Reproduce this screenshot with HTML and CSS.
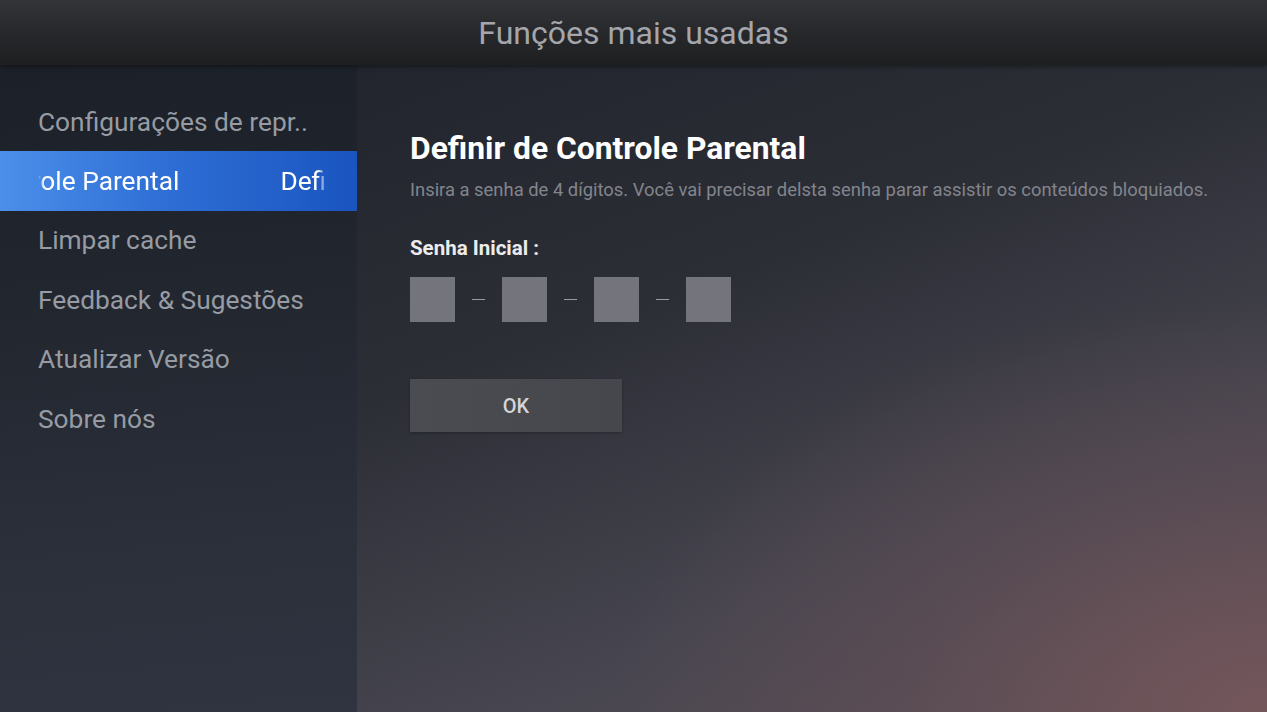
FILE: index.html
```html
<!DOCTYPE html>
<html lang="pt">
<head>
    <meta charset="UTF-8">
    <meta name="viewport" content="width=device-width, initial-scale=1.0">
    <title>Funções mais usadas</title>
    <link rel="stylesheet" href="styles.css">
</head>
<body>
    <div class="screen">
        <header class="topbar">
            <h1 class="topbar-title">Funções mais usadas</h1>
        </header>

        <div class="body">
            <nav class="menu">
                <div class="menu-item">Configurações de repr..</div>
                <div class="menu-item active">
                    <div class="marquee">
                        <span class="marquee-text">Definir de Controle Parental</span>
                        <span class="marquee-text">Definir de Controle Parental</span>
                    </div>
                </div>
                <div class="menu-item">Limpar cache</div>
                <div class="menu-item">Feedback &amp; Sugestões</div>
                <div class="menu-item">Atualizar Versão</div>
                <div class="menu-item">Sobre nós</div>
            </nav>

            <main class="panel">
                <h2 class="panel-title">Definir de Controle Parental</h2>
                <p class="panel-hint">Insira a senha de 4 dígitos. Você vai precisar delsta senha parar assistir os conteúdos bloquiados.</p>

                <div class="field-label">Senha Inicial<span class="colon">:</span></div>
                <div class="pin">
                    <div class="pin-box"></div>
                    <div class="pin-dash"></div>
                    <div class="pin-box"></div>
                    <div class="pin-dash"></div>
                    <div class="pin-box"></div>
                    <div class="pin-dash"></div>
                    <div class="pin-box"></div>
                </div>

                <button class="btn-ok">OK</button>
            </main>
        </div>
    </div>
</body>
</html>
```

FILE: styles.css
```css
html, body {
    margin: 0;
    padding: 0;
}

body {
    font-family: Roboto, 'Noto Sans', sans-serif;
    background: #22252c;
    width: 1267px;
    height: 712px;
    overflow: hidden;
}

.screen {
    width: 1267px;
    height: 712px;
    display: flex;
    flex-direction: column;
}

.topbar {
    height: 65px;
    flex: none;
    background: linear-gradient(180deg, #333437 0%, #27282b 50%, #1e1f21 100%);
    display: flex;
    align-items: center;
    justify-content: center;
    box-shadow: 0 2px 4px rgba(0,0,0,0.35);
    position: relative;
    z-index: 1;
}

.topbar-title {
    margin: 0;
    font-size: 32px;
    font-weight: 400;
    color: #a4a6ab;
    line-height: 38px;
}

.body {
    flex: 1;
    display: flex;
}

.menu {
    width: 357px;
    flex: none;
    padding-top: 27px;
    background: linear-gradient(175deg, #1c2028 0%, #222730 40%, #2b303b 75%, #2f3440 100%);
    box-sizing: border-box;
}

.menu-item {
    height: 59.4px;
    display: flex;
    align-items: center;
    padding-left: 38px;
    font-size: 26.3px;
    color: #979ba3;
    white-space: nowrap;
}

.menu-item.active {
    background: linear-gradient(90deg, #4b8fe9 0%, #2f6fd6 45%, #1a55bf 100%);
    color: #ffffff;
}

.marquee {
    width: 289px;
    overflow: hidden;
    display: flex;
    gap: 101px;
    white-space: nowrap;
    -webkit-mask-image: linear-gradient(90deg, transparent 0, #000 6px, #000 280px, transparent 289px);
    mask-image: linear-gradient(90deg, transparent 0, #000 6px, #000 280px, transparent 289px);
}

.marquee-text {
    flex: none;
}

.marquee-text:first-child {
    margin-left: -179px;
}

.panel {
    flex: 1;
    padding: 64px 0 0 53px;
    background:
        radial-gradient(ellipse 90% 80% at 100% 100%, rgba(120, 88, 92, 0.85) 0%, rgba(100, 78, 86, 0.5) 45%, rgba(60, 60, 70, 0) 80%),
        linear-gradient(160deg, #22252d 0%, #2c2e36 35%, #46454f 70%, #5a4f56 100%);
}

.panel-title {
    margin: 0;
    font-size: 31.8px;
    font-weight: 700;
    color: #ffffff;
    line-height: 38px;
}

.panel-hint {
    margin: 12px 0 0;
    font-size: 18.4px;
    color: #82858c;
    line-height: 22px;
}

.field-label {
    margin-top: 35px;
    font-size: 20.5px;
    font-weight: 700;
    color: #ececec;
    line-height: 24px;
}

.colon {
    margin-left: 5px;
}

.pin {
    margin-top: 17px;
    display: flex;
    align-items: center;
}

.pin-box {
    width: 45px;
    height: 45px;
    background: #74757c;
}

.pin-dash {
    width: 13px;
    height: 1px;
    background: #9a9ba0;
    margin: 0 17px;
}

.btn-ok {
    display: block;
    margin-top: 57px;
    width: 212px;
    height: 53px;
    border: none;
    background: linear-gradient(90deg, #4a4c52 0%, #45474d 100%);
    color: #d4d4d6;
    font-family: Roboto, 'Noto Sans', sans-serif;
    font-size: 20px;
    font-weight: 500;
    box-shadow: 0 1px 3px rgba(0,0,0,0.25);
}
```
